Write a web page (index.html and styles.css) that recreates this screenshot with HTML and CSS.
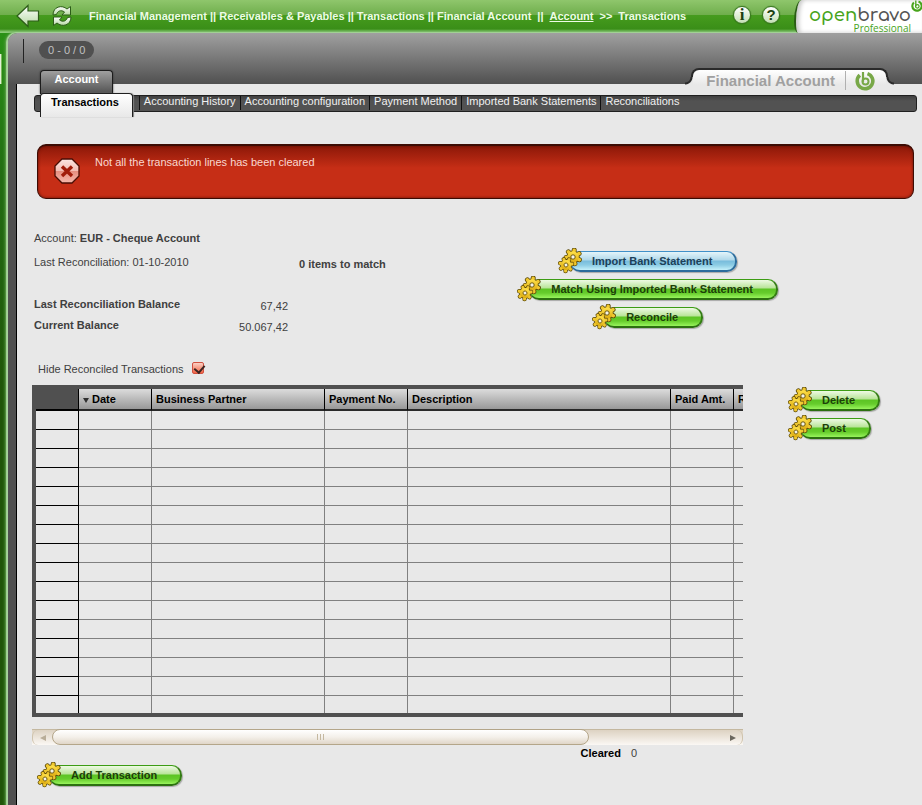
FILE: index.html
```
<!DOCTYPE html>
<html lang="en">
<head>
    <meta charset="utf-8">
    <meta name="viewport" content="width=device-width, initial-scale=1">
    <title>Financial Account</title>
    <link rel="stylesheet" href="styles.css">
</head>
<body>
    <!-- shared icons -->
    <svg class="defs" width="0" height="0" aria-hidden="true">
        <defs>
            <linearGradient id="gold" x1="0" y1="0" x2="0" y2="1">
                <stop offset="0" stop-color="#ffe24c"/>
                <stop offset="1" stop-color="#dcaa10"/>
            </linearGradient>
            <linearGradient id="silver" x1="0" y1="0" x2="0" y2="1">
                <stop offset="0" stop-color="#ffffff"/>
                <stop offset="1" stop-color="#b4d8a0"/>
            </linearGradient>
            <linearGradient id="pink" x1="0" y1="0" x2="0" y2="1">
                <stop offset="0" stop-color="#fbe6e2"/>
                <stop offset="0.5" stop-color="#f3bdb3"/>
                <stop offset="0.52" stop-color="#e58f80"/>
                <stop offset="1" stop-color="#f5b8ac"/>
            </linearGradient>
            <g id="cog">
                <path d="M0 0L1.2-6.9M0 0L6.1-3.4M0 0L6.4 2.7M0 0L1.9 6.7M0 0L-4.1 5.7M0 0L-7 .4M0 0L-4.6-5.2" stroke="#5c4a0a" stroke-width="5" stroke-linecap="round"/>
                <circle r="6.6" fill="#5c4a0a"/>
                <path d="M0 0L1.2-6.9M0 0L6.1-3.4M0 0L6.4 2.7M0 0L1.9 6.7M0 0L-4.1 5.7M0 0L-7 .4M0 0L-4.6-5.2" stroke="#f0c830" stroke-width="3.4" stroke-linecap="round"/>
                <circle r="5.8" fill="url(#gold)"/>
                <circle r="2.2" fill="#f4f4ea" stroke="#6b560c"/>
            </g>
            <symbol id="gears" viewBox="0 0 26 26">
                <use href="#cog" transform="translate(16 9)"/>
                <use href="#cog" transform="translate(9 17) rotate(20) scale(.88)"/>
            </symbol>
            <symbol id="bravo" viewBox="0 0 20 20">
                <path d="M12.500 2.600A7.800 7.800 0 1 1 4.800 4.200" fill="none" stroke="currentColor" stroke-width="3.600"/>
                <path d="M8 1V10.800" fill="none" stroke="currentColor" stroke-width="2.200"/>
                <circle cx="10.500" cy="10.600" r="3" fill="none" stroke="currentColor" stroke-width="2"/>
            </symbol>
        </defs>
    </svg>

    <header class="topbar">
        <div class="tools">
            <button class="icon-btn" aria-label="Back">
                <svg width="24" height="24" viewBox="0 0 24 24"><path d="M1 12L12 1.500V7H22.500V17H12V22.500Z" fill="url(#silver)" stroke="#2c5c18" stroke-width="1.200"/></svg>
            </button>
            <button class="icon-btn" aria-label="Refresh">
                <svg width="22" height="22" viewBox="0 0 22 22" fill="url(#silver)" stroke="#2c5c18">
                    <path d="M2 10C2 1.500 11-.5 16 4L19.500 1.500V10H11L13.500 7C10 4.500 6.500 6 5.500 9.500Z"/>
                    <path d="M20 12C20 20.500 11 22.500 6 18L2.500 20.500V12H11L8.500 15C12 17.500 15.500 16 16.500 12.500Z"/>
                </svg>
            </button>
        </div>
        <nav class="crumbs">
            <span>Financial Management || Receivables &amp; Payables || Transactions || Financial Account</span>
            <span>||</span>
            <a href="#">Account</a>
            <span>&gt;&gt;</span>
            <span>Transactions</span>
        </nav>
        <div class="help">
            <button class="round" aria-label="About">i</button>
            <button class="round sans" aria-label="Help">?</button>
        </div>
        <div class="logo">
            <div class="logo-name"><span>open</span>bravo</div>
            <div class="logo-edition">Professional</div>
            <svg class="logo-mark" width="12" height="12"><use href="#bravo"/></svg>
        </div>
    </header>

    <div class="side-handle"></div>

    <div class="frame">
        <div class="toolbar">
            <span class="records">0 - 0 / 0</span>
            <div class="window-title">
                <h1>Financial Account</h1>
                <svg class="title-mark" width="20" height="20"><use href="#bravo"/></svg>
            </div>
        </div>

        <main class="content">
            <nav class="tabs">
                <a class="main-tab" href="#">Account</a>
                <div class="subtabs">
                    <a class="active" href="#">Transactions</a>
                    <a href="#">Accounting History</a>
                    <a href="#">Accounting configuration</a>
                    <a href="#">Payment Method</a>
                    <a href="#">Imported Bank Statements</a>
                    <a href="#">Reconciliations</a>
                </div>
            </nav>

            <div class="message" role="alert">
                <svg width="26" height="26" viewBox="0 0 26 26">
                    <path d="M8 1H18L25 8V18L18 25H8L1 18V8Z" fill="url(#pink)" stroke="#4a0d04" stroke-width="1.300"/>
                    <path d="M8 8.500L18 18M18 8.500L8 18" stroke="#a01c0a" stroke-width="3.400"/>
                </svg>
                <p>Not all the transaction lines has been cleared</p>
            </div>

            <section class="summary">
                <div class="figures">
                    <p>Account: <b>EUR - Cheque Account</b></p>
                    <p class="recon"><span>Last Reconciliation: 01-10-2010</span><b>0 items to match</b></p>
                    <dl class="balances">
                        <dt>Last Reconciliation Balance</dt><dd>67,42</dd>
                        <dt>Current Balance</dt><dd>50.067,42</dd>
                    </dl>
                </div>
                <div class="processes">
                    <button class="pill blue"><svg><use href="#gears"/></svg>Import Bank Statement</button>
                    <button class="pill"><svg><use href="#gears"/></svg>Match Using Imported Bank Statement</button>
                    <button class="pill"><svg><use href="#gears"/></svg>Reconcile</button>
                </div>
            </section>

            <div class="hide-row">
                <label for="hide">Hide Reconciled Transactions</label>
                <input type="checkbox" id="hide" checked>
            </div>

            <div class="grid-area">
                <div class="grid-col">
                    <div class="grid">
                        <table>
                            <colgroup><col class="c-num"><col class="c-date"><col class="c-partner"><col class="c-pay"><col class="c-desc"><col class="c-paid"><col class="c-rec"></colgroup>
                            <thead>
                                <tr><td></td><th class="sorted">Date</th><th>Business Partner</th><th>Payment No.</th><th>Description</th><th>Paid Amt.</th><th>Received Amt.</th></tr>
                            </thead>
                            <tbody>
                                <tr><td></td><td></td><td></td><td></td><td></td><td></td><td></td></tr>
                                <tr><td></td><td></td><td></td><td></td><td></td><td></td><td></td></tr>
                                <tr><td></td><td></td><td></td><td></td><td></td><td></td><td></td></tr>
                                <tr><td></td><td></td><td></td><td></td><td></td><td></td><td></td></tr>
                                <tr><td></td><td></td><td></td><td></td><td></td><td></td><td></td></tr>
                                <tr><td></td><td></td><td></td><td></td><td></td><td></td><td></td></tr>
                                <tr><td></td><td></td><td></td><td></td><td></td><td></td><td></td></tr>
                                <tr><td></td><td></td><td></td><td></td><td></td><td></td><td></td></tr>
                                <tr><td></td><td></td><td></td><td></td><td></td><td></td><td></td></tr>
                                <tr><td></td><td></td><td></td><td></td><td></td><td></td><td></td></tr>
                                <tr><td></td><td></td><td></td><td></td><td></td><td></td><td></td></tr>
                                <tr><td></td><td></td><td></td><td></td><td></td><td></td><td></td></tr>
                                <tr><td></td><td></td><td></td><td></td><td></td><td></td><td></td></tr>
                                <tr><td></td><td></td><td></td><td></td><td></td><td></td><td></td></tr>
                                <tr><td></td><td></td><td></td><td></td><td></td><td></td><td></td></tr>
                                <tr><td></td><td></td><td></td><td></td><td></td><td></td><td></td></tr>
                            </tbody>
                        </table>
                    </div>
                    <div class="scrollbar">
                        <button class="arrow" aria-label="Scroll left"><svg width="6" height="6"><path d="M6 0V6L0 3Z" fill="#b9ad98"/></svg></button>
                        <div class="track"><div class="thumb"></div></div>
                        <button class="arrow right" aria-label="Scroll right"><svg width="6" height="6"><path d="M0 0V6L6 3Z" fill="#6b675e"/></svg></button>
                    </div>
                    <p class="cleared"><b>Cleared</b><span>0</span></p>
                </div>
                <div class="row-actions">
                    <button class="pill"><svg><use href="#gears"/></svg>Delete</button>
                    <button class="pill"><svg><use href="#gears"/></svg>Post</button>
                </div>
            </div>

            <button class="pill add"><svg><use href="#gears"/></svg>Add Transaction</button>
        </main>
    </div>
</body>
</html>
```

FILE: styles.css
```
* {
    box-sizing: border-box;
}

body {
    margin: 0;
    min-height: 100vh;
    display: flex;
    flex-direction: column;
    position: relative;
    overflow-x: hidden;
    font-family: "Liberation Sans", Arial, sans-serif;
    font-size: 11px;
    line-height: 14px;
    color: #404040;
    background: linear-gradient(#2a9216 30px, #226c12 180px, #205408 400px, #205408);
}

p, h1, dl, dd {
    margin: 0;
}

button {
    font: inherit;
    padding: 0;
    border: 0;
    background: none;
}

.defs {
    position: absolute;
}

/* top bar */
.topbar {
    display: flex;
    align-items: flex-start;
    height: 33px;
    background: linear-gradient(#8fc66c, #6fae4c 15px, #469c1e 15px, #3a8e18 29px, #8ccb78 32px);
}

.tools {
    display: flex;
    align-items: center;
    gap: 11px;
    width: 89px;
    height: 31px;
    padding-left: 16px;
}

.icon-btn {
    display: flex;
}

.crumbs {
    display: flex;
    gap: 6px;
    flex: 1;
    padding-top: 9px;
    white-space: nowrap;
    font-weight: bold;
    color: #eefbe6;
}

.crumbs a {
    color: inherit;
}

.help {
    display: flex;
    gap: 11px;
    padding: 6px 14px 0 0;
}

.round {
    width: 18px;
    height: 18px;
    border: 1px solid #3a7a20;
    border-radius: 50%;
    background: linear-gradient(#ffffff, #c4dfb4);
    box-shadow: 0 0 1px #1c4a0c;
    font: bold 17px/16px "Liberation Serif", serif;
    color: #1c4010;
}

.round.sans {
    font: bold 15px/16px "Liberation Sans", sans-serif;
}

.logo {
    position: relative;
    width: 128px;
    height: 33px;
    padding: 6px 11px 0 0;
    text-align: right;
    background: #ffffff;
    border-left: 2px solid #2a5c14;
    border-top-left-radius: 8px 22px;
    border-bottom-left-radius: 4px 12px;
    box-shadow: inset 3px 0 4px #c8c8c8;
    color: #555555;
}

.logo-name {
    font: 600 18px/18px Comfortaa, Lato, sans-serif;
}

.logo-name span, .logo-edition {
    color: #48a41c;
}

.logo-edition {
    font: 10px/8px "Open Sans", sans-serif;
}

.logo-mark {
    position: absolute;
    top: 0;
    right: -1px;
    color: #48a41c;
}

.side-handle {
    position: absolute;
    left: 0;
    top: 54px;
    width: 2px;
    height: 30px;
    background: #e4f0d8;
    border-right: 1px solid #7cb85c;
}

/* window frame */
.frame {
    flex: 1;
    display: flex;
    flex-direction: column;
    margin-left: 8px;
    border-top-left-radius: 9px;
    background: linear-gradient(#a0a0a0, #505050 51px);
    box-shadow: -1px 0 1px 1px #a8d49c, -2px 0 3px 1px #5ca048;
}

.toolbar {
    display: flex;
    align-items: flex-start;
    height: 51px;
    padding: 6px 34px 0 15px;
}

.toolbar::before {
    content: "";
    width: 1px;
    height: 24px;
    background: #222222;
}

.records {
    margin: 2px auto 0 15px;
    padding: 0 9px;
    border-radius: 9px;
    background: #505050;
    color: #c0c0c0;
    line-height: 18px;
}

.window-title {
    position: relative;
    z-index: 1;
    display: flex;
    align-items: flex-start;
    height: 17px;
    margin-top: 29px;
    padding: 1px 11px 0 13px;
    border: 2px solid #2a2a2a;
    border-bottom: 0;
    border-radius: 8px 8px 0 0;
    background: linear-gradient(#ffffff, #e8e8e8);
}

/* curved feet where the title tab meets the page */
.window-title::before, .window-title::after {
    content: "";
    position: absolute;
    top: 7px;
    width: 8px;
    height: 8px;
}

.window-title::before {
    left: -8px;
    background: radial-gradient(circle at 0 0, transparent 5px, #2a2a2a 6px 7px, #e8e8e8 8px);
}

.window-title::after {
    right: -8px;
    background: radial-gradient(circle at 100% 0, transparent 5px, #2a2a2a 6px 7px, #e8e8e8 8px);
}

.window-title h1 {
    padding-right: 10px;
    border-right: 1px solid #b0b0b0;
    font-size: 15px;
    line-height: 19px;
    color: #a0a0a0;
}

.title-mark {
    flex: none;
    margin-left: 9px;
    color: #78a848;
}

.content {
    flex: 1;
    margin-left: 8px;
    padding: 0 5px 18px 15px;
    border-left: 1px solid #000000;
    background: #e8e8e8;
}

/* tabs */
.tabs {
    position: relative;
    margin-top: -14px;
    padding-left: 2px;
}

.tabs a {
    color: #f0f0f0;
    text-decoration: none;
}

.tabs .main-tab {
    display: block;
    width: 73px;
    height: 24px;
    margin-left: 6px;
    border: 1px solid #1c1c1c;
    border-bottom: 0;
    border-radius: 4px 4px 0 0;
    background: linear-gradient(#a0a0a0, #505050);
    box-shadow: 0 0 2px #303030;
    font-weight: bold;
    line-height: 16px;
    text-align: center;
    color: #ffffff;
}

.subtabs {
    display: flex;
    height: 17px;
    margin-top: 1px;
    padding-left: 5px;
    border: 1px solid #202020;
    border-radius: 3px;
    background: linear-gradient(#404040, #525252 5px);
    line-height: 11px;
}

.subtabs a {
    height: 14px;
    padding: 0 4px;
    border-left: 1px solid #101010;
}

.subtabs .active {
    height: 24px;
    margin: -3px 6px 0 0;
    padding: 0 13px 0 10px;
    border: 1px solid #202020;
    border-bottom: 0;
    border-radius: 4px 4px 0 0;
    background: linear-gradient(#ffffff, #e8e8e8);
    box-shadow: 1px 0 1px #808080;
    font-weight: bold;
    line-height: 17px;
    color: #000000;
}

/* message box */
.message {
    display: flex;
    gap: 15px;
    height: 55px;
    margin: 32px 3px 0 5px;
    padding: 9px 16px;
    border: 1px solid #3c0c04;
    border-top-width: 2px;
    border-radius: 9px;
    background: linear-gradient(#8c1808, #c62e16 22px);
    box-shadow: inset 0 0 3px #5c1004;
    color: #fbd8d0;
}

.message svg {
    margin-top: 3px;
}

/* account summary */
.summary {
    display: flex;
    margin-top: 32px;
    padding-left: 2px;
}

.figures {
    flex: 1;
}

.recon {
    display: flex;
    margin-top: 10px;
}

.recon span {
    width: 265px;
}

.recon b {
    padding-top: 2px;
}

.balances {
    display: grid;
    grid-template-columns: 160px 94px;
    row-gap: 5px;
    margin-top: 26px;
}

.balances dt {
    font-weight: bold;
}

.balances dd {
    padding-top: 2px;
    text-align: right;
}

.processes {
    display: flex;
    flex-direction: column;
    align-items: center;
    padding: 16px 139px 0 0;
}

/* process buttons */
.pill {
    position: relative;
    display: block;
    height: 21px;
    margin: 4px 0 3px 13px;
    padding: 0 23px 0 21px;
    border: 1px solid #3c9c14;
    border-bottom: 2px solid #2c7010;
    border-right: 2px solid #347c14;
    border-radius: 10px;
    background: linear-gradient(#eefae4, #b8e498 8px, #5cc424 9px, #66cc2c 13px, #98f45c);
    box-shadow: 1px 1px 1px #a8a8a8;
    font-weight: bold;
    line-height: 18px;
    white-space: nowrap;
    color: #1c4008;
}

.pill.blue {
    border-color: #4090c8 #2c6c9c #2c6c9c #4090c8;
    background: linear-gradient(#e4f4fa, #b0d8ea 8px, #78bcdc 9px, #8ccce4 13px, #c4f0fa);
    color: #1c4058;
}

.pill svg {
    position: absolute;
    left: -14px;
    top: -4px;
    width: 26px;
    height: 26px;
}

.hide-row {
    display: flex;
    gap: 8px;
    margin-top: 28px;
    padding-left: 6px;
}

.hide-row input {
    appearance: none;
    width: 12px;
    height: 12px;
    margin: 0;
    border: 1px solid #d05040;
    border-radius: 2px;
    background: linear-gradient(#fbd0c4, #f46444);
}

.hide-row input:checked::before {
    content: "";
    display: block;
    width: 5px;
    height: 8px;
    margin-left: 3px;
    border: solid #3c2420;
    border-width: 0 2px 2px 0;
    transform: rotate(40deg);
}

/* transactions grid */
.grid-area {
    display: flex;
    margin-top: 9px;
}

.grid-col {
    flex: 1;
    min-width: 0;
}

.grid {
    overflow: hidden;
    border: 4px solid #505050;
    border-right: 0;
}

.grid table {
    width: 788px;
    table-layout: fixed;
    border-spacing: 0;
}

.c-num { width: 43px; }
.c-date { width: 73px; }
.c-partner { width: 173px; }
.c-pay { width: 83px; }
.c-desc { width: 263px; }
.c-paid { width: 63px; }
.c-rec { width: 90px; }

.grid th, .grid td {
    height: 19px;
    padding: 0;
    border-right: 1px solid #808080;
    border-bottom: 1px solid #808080;
}

.grid thead th, .grid thead td {
    height: 22px;
    border-right-color: #000000;
    border-bottom: 2px solid #282828;
}

.grid th {
    padding-left: 4px;
    background: linear-gradient(#dcdcdc, #989898);
    text-align: left;
    color: #000000;
}

.grid thead td {
    background: #505050;
    border-bottom-color: #000000;
}

.grid tbody td:first-child {
    border-color: #000000;
}

.grid tbody tr:last-child td {
    height: 17px;
    border-bottom: 0;
}

.sorted::before {
    content: "";
    display: inline-block;
    margin-right: 3px;
    border: 3px solid transparent;
    border-top: 5px solid #303030;
    border-bottom: 0;
}

/* scrollbar */
.scrollbar {
    display: flex;
    height: 16px;
    margin-top: 12px;
    border-top: 1px solid #c4b8a0;
    background: linear-gradient(#ddd2c2, #fbf8f4);
}

.arrow {
    display: flex;
    align-items: center;
    justify-content: center;
    width: 20px;
    border-left: 1px solid #cfc3ad;
    border-radius: 6px 0 0 6px;
}

.arrow.right {
    border-left: 0;
    border-right: 1px solid #cfc3ad;
    border-radius: 0 6px 6px 0;
}

.track {
    flex: 1;
}

.thumb {
    width: 80%;
    height: 16px;
    margin-top: -1px;
    border: 1px solid #b4a68a;
    border-radius: 8px;
    background:
        repeating-linear-gradient(90deg, #c4b8a0 0 1px, transparent 1px 3px) center / 7px 6px no-repeat,
        linear-gradient(#ffffff, #f4f0ea 7px, #e0d6c8);
}

.cleared {
    display: flex;
    justify-content: flex-end;
    gap: 10px;
    padding: 1px 106px 0 0;
}

.cleared b {
    color: #000000;
}

.row-actions {
    display: flex;
    flex-direction: column;
    align-items: flex-start;
    width: 174px;
    padding: 1px 0 0 44px;
}

.pill.add {
    margin: 5px 0 0 17px;
}
```
